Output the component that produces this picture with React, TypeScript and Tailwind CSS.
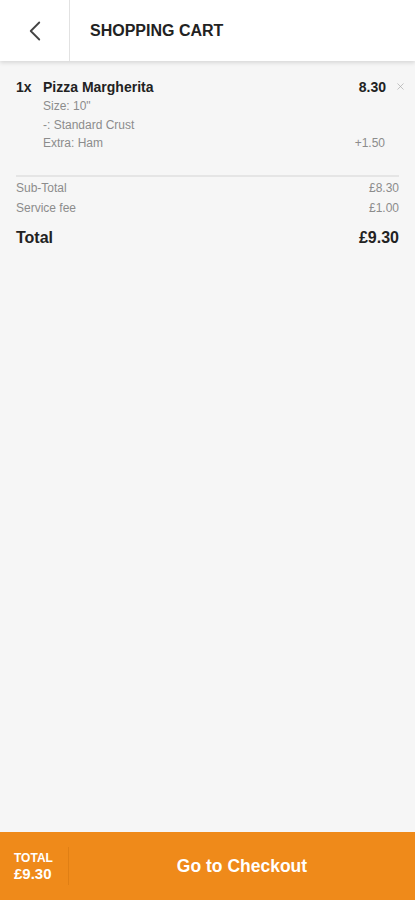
import { ChevronLeft, X } from "lucide-react";

export default function App() {
    return (
        <div className="w-full h-[900px] flex flex-col bg-[#f6f6f6] font-['Liberation_Sans',Arial,sans-serif] text-[#222]">
            <header className="h-[61px] flex items-stretch bg-white shadow-[0_2px_4px_rgba(0,0,0,0.12)] relative z-10">
                <div className="w-[70px] flex items-center justify-center border-r border-[#e2e2e2]">
                    <ChevronLeft className="w-[34px] h-[34px] text-[#444]" strokeWidth={1.3} />
                </div>
                <div className="flex items-center pl-[20px] text-[16px] font-bold text-[#222]">
                    SHOPPING CART
                </div>
            </header>

            <main className="flex-1 px-[16px] pt-[17px]">
                <div className="flex items-center text-[14px] font-bold leading-[18px]">
                    <span className="w-[27px]">1x</span>
                    <span className="flex-1">Pizza Margherita</span>
                    <span className="pr-[9px]">8.30</span>
                    <X className="w-[11px] h-[11px] text-[#aaa] mr-[-7px] mt-[-2px]" strokeWidth={1.5} />
                </div>
                <div className="pl-[27px] pr-[14px] text-[12px] text-[#8c8c8c] leading-[18.5px] mt-[1px]">
                    <div>Size: 10"</div>
                    <div>-: Standard Crust</div>
                    <div className="flex justify-between">
                        <span>Extra: Ham</span>
                        <span>+1.50</span>
                    </div>
                </div>

                <div className="mt-[22px] border-t-2 border-[#e5e5e5]" />

                <div className="pt-[1px] text-[12px] text-[#8c8c8c] leading-[20px]">
                    <div className="flex justify-between">
                        <span>Sub-Total</span>
                        <span>£8.30</span>
                    </div>
                    <div className="flex justify-between">
                        <span>Service fee</span>
                        <span>£1.00</span>
                    </div>
                </div>
                <div className="flex justify-between mt-[8px] text-[16px] font-bold text-[#222]">
                    <span>Total</span>
                    <span>£9.30</span>
                </div>
            </main>

            <footer className="h-[68px] bg-[#ef8a1a] flex items-center text-white">
                <div className="w-[69px] h-[38px] pl-[14px] flex flex-col justify-center border-r border-[#e07f14] font-bold">
                    <span className="text-[12px] leading-[14px]">TOTAL</span>
                    <span className="text-[15px] leading-[17px]">£9.30</span>
                </div>
                <div className="flex-1 text-center text-[17.5px] font-bold">Go to Checkout</div>
            </footer>
        </div>
    );
}
